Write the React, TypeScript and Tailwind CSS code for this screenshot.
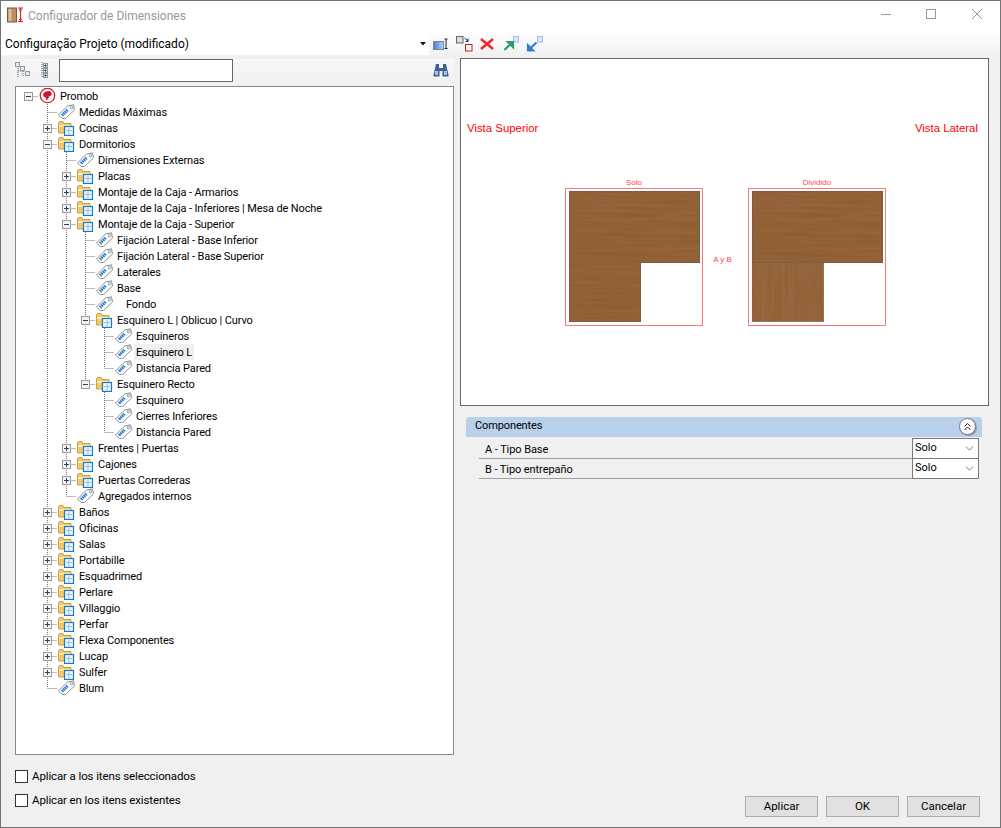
import { ChevronDown } from "lucide-react";

type Node = {
  label: string;
  icon: "root" | "folder" | "tag";
  open?: boolean;
  shift?: boolean;
  selected?: boolean;
  children?: Node[];
};

const tag = (label: string, extra: Partial<Node> = {}): Node => ({ label, icon: "tag", ...extra });
const closed = (label: string): Node => ({ label, icon: "folder", children: [tag("x")], open: false });
const opened = (label: string, children: Node[]): Node => ({ label, icon: "folder", open: true, children });

const tree: Node = {
  label: "Promob",
  icon: "root",
  open: true,
  children: [
    tag("Medidas Máximas"),
    closed("Cocinas"),
    opened("Dormitorios", [
      tag("Dimensiones Externas"),
      closed("Placas"),
      closed("Montaje de la Caja - Armarios"),
      closed("Montaje de la Caja - Inferiores | Mesa de Noche"),
      opened("Montaje de la Caja - Superior", [
        tag("Fijación Lateral - Base Inferior"),
        tag("Fijación Lateral - Base Superior"),
        tag("Laterales"),
        tag("Base"),
        tag("Fondo", { shift: true }),
        opened("Esquinero L | Oblicuo | Curvo", [
          tag("Esquineros"),
          tag("Esquinero L", { selected: true }),
          tag("Distancia Pared"),
        ]),
        opened("Esquinero Recto", [
          tag("Esquinero"),
          tag("Cierres Inferiores"),
          tag("Distancia Pared"),
        ]),
      ]),
      closed("Frentes | Puertas"),
      closed("Cajones"),
      closed("Puertas Correderas"),
      tag("Agregados internos"),
    ]),
    closed("Baños"),
    closed("Oficinas"),
    closed("Salas"),
    closed("Portábille"),
    closed("Esquadrimed"),
    closed("Perlare"),
    closed("Villaggio"),
    closed("Perfar"),
    closed("Flexa Componentes"),
    closed("Lucap"),
    closed("Sulfer"),
    tag("Blum"),
  ],
};

const Guide = ({ show }: { show: boolean }) => (
  <svg width="19" height="16" className="shrink-0">
    {show && <line x1="9.5" y1="0" x2="9.5" y2="16" stroke="#777" strokeDasharray="1 1" />}
  </svg>
);

const Connector = ({ node, isLast, isRoot }: { node: Node; isLast: boolean; isRoot: boolean }) => {
  const hasBox = !!node.children;
  return (
    <svg width="19" height="16" className="shrink-0">
      {!isRoot && <line x1="9.5" y1="0" x2="9.5" y2={isLast ? 8 : 16} stroke="#777" strokeDasharray="1 1" />}
      <line x1="9.5" y1="8.5" x2="19" y2="8.5" stroke="#777" strokeDasharray="1 1" />
      {hasBox && (
        <g>
          <rect x="5.5" y="4.5" width="8" height="8" fill="#f4f4f4" stroke="#9a9a9a" />
          <line x1="7" y1="8.5" x2="12" y2="8.5" stroke="#2c3e6b" />
          {!node.open && <line x1="9.5" y1="6" x2="9.5" y2="11" stroke="#2c3e6b" />}
        </g>
      )}
    </svg>
  );
};

const NodeIcon = ({ kind }: { kind: Node["icon"] }) => {
  if (kind === "root") {
    return (
      <svg width="19" height="16" viewBox="0 0 19 16" className="shrink-0">
        <circle cx="9.5" cy="7.5" r="7.2" fill="#fff" stroke="#d8232f" strokeWidth="1.3" />
        <path d="M5 6 L7.5 3.5 L12 3 L14 5.5 L12.5 8 L11 8.5 L10 11 L8.5 12.5 L7.5 9.5 L5.5 8.5 Z" fill="#d0182a" />
      </svg>
    );
  }
  if (kind === "tag") {
    return (
      <svg width="19" height="16" viewBox="0 0 19 16" className="shrink-0">
        <path d="M1.5 11 L10.5 2 L16.5 0.8 L17.5 6 L8.5 14.5 L5.5 14.5 Z" fill="#fff" stroke="#8b8f96" />
        <line x1="5" y1="11.5" x2="11" y2="5.5" stroke="#2f7ad0" strokeWidth="3" strokeDasharray="1.6 0.5" />
        <circle cx="14.5" cy="3.6" r="1.3" fill="#fff" stroke="#8b8f96" />
      </svg>
    );
  }
  return (
    <svg width="19" height="16" viewBox="0 0 19 16" className="shrink-0">
      <path d="M1.5 2.5 L1.5 13 L14 13 L14 3.5 L7 3.5 L6 1.5 L2.5 1.5 Z" fill="#f3c76a" stroke="#c9a04e" />
      <rect x="2" y="5" width="11.5" height="2" fill="#fdeab5" />
      <rect x="7.5" y="6.5" width="9" height="9" fill="#eaf4fb" stroke="#1878c0" strokeWidth="1.2" />
      <path d="M9 10.5H15M12 8V14.5" stroke="#8fc0e2" strokeWidth="1" fill="none" />
    </svg>
  );
};

const TreeRows = ({ node, guides, isLast, isRoot }: { node: Node; guides: boolean[]; isLast: boolean; isRoot?: boolean }) => (
  <>
    <div className="flex h-4 items-center">
      {guides.map((g, i) => (
        <Guide key={i} show={g} />
      ))}
      <Connector node={node} isLast={isLast} isRoot={!!isRoot} />
      <NodeIcon kind={node.icon} />
      <span
        className={`ml-[1px] flex h-4 items-center whitespace-nowrap px-[2px] pt-px text-[11px] leading-4 tracking-[-0.13px] text-black ${
          node.selected ? "bg-[#f0f0f0]" : ""
        } ${node.shift ? "pl-[11px]" : ""}`}
      >
        {node.label}
      </span>
    </div>
    {node.open &&
      node.children?.map((child, i) => (
        <TreeRows
          key={child.label + i}
          node={child}
          guides={[...guides, !isLast && !isRoot ? true : false]}
          isLast={i === node.children!.length - 1}
        />
      ))}
  </>
);

const WoodFilters = () => (
  <svg width="0" height="0" className="absolute">
    <defs>
      <filter id="grainH" x="0" y="0" width="100%" height="100%">
        <feTurbulence type="fractalNoise" baseFrequency="0.012 0.3" numOctaves="3" seed="4" />
        <feColorMatrix values="0 0 0 0 0.2  0 0 0 0 0.1  0 0 0 0 0  0.75 0 0 0 -0.2" />
        <feComposite in2="SourceGraphic" operator="in" result="n" />
        <feMerge>
          <feMergeNode in="SourceGraphic" />
          <feMergeNode in="n" />
        </feMerge>
      </filter>
      <filter id="grainV" x="0" y="0" width="100%" height="100%">
        <feTurbulence type="fractalNoise" baseFrequency="0.3 0.012" numOctaves="3" seed="9" />
        <feColorMatrix values="0 0 0 0 0.2  0 0 0 0 0.1  0 0 0 0 0  0.75 0 0 0 -0.2" />
        <feComposite in2="SourceGraphic" operator="in" result="n" />
        <feMerge>
          <feMergeNode in="SourceGraphic" />
          <feMergeNode in="n" />
        </feMerge>
      </filter>
    </defs>
  </svg>
);

const WoodSolo = () => (
  <svg width="131" height="131" viewBox="0 0 131 131" className="block">
    <path d="M0 0H131V72H72V131H0Z" fill="#96643e" filter="url(#grainH)" />
    <path d="M.5 .5H130.5V71.5H71.5V130.5H.5Z" fill="none" stroke="#7a5f48" />
  </svg>
);

const WoodSplit = () => (
  <svg width="131" height="131" viewBox="0 0 131 131" className="block">
    <rect x="0" y="72" width="72" height="59" fill="#9a6842" filter="url(#grainV)" />
    <rect x="0" y="0" width="131" height="72" fill="#96643e" filter="url(#grainH)" />
    <path d="M.5 .5H130.5V71.5H.5Z" fill="none" stroke="#7a5f48" />
    <path d="M71.5 72V130.5H0" fill="none" stroke="#8a7563" />
  </svg>
);

const Diagram = ({ label, children, pad }: { label: string; children: React.ReactNode; pad: string }) => (
  <div className="flex flex-col items-center">
    <span className="h-[10px] font-['Liberation_Sans',sans-serif] text-[8px] leading-[10px] text-[#f44]">{label}</span>
    <div className={`h-[138px] w-[138px] border border-[#f77] ${pad}`}>{children}</div>
  </div>
);

const TitleIcon = () => (
  <svg width="17" height="17" viewBox="0 0 17 17">
    <rect x="0.5" y="1" width="9" height="14" fill="#b98f62" stroke="#7a5a3a" />
    <rect x="1.5" y="2" width="3" height="12" fill="#d9bd98" />
    <path d="M13.5 1V14.5M11 1H16M11 14.5H16M12 3H15M12 12.5H15" stroke="#e0162b" strokeWidth="1.2" fill="none" />
  </svg>
);

const WindowControls = () => (
  <div className="flex items-center">
    <svg width="46" height="29" className="block">
      <line x1="20" y1="13.5" x2="30" y2="13.5" stroke="#9a9a9a" />
    </svg>
    <svg width="46" height="29" className="block">
      <rect x="19.5" y="8.5" width="9" height="9" fill="none" stroke="#9a9a9a" />
    </svg>
    <svg width="46" height="29" className="block">
      <path d="M19 8L29 18M29 8L19 18" stroke="#9a9a9a" fill="none" />
    </svg>
  </div>
);

const ResizeIcon = () => (
  <svg width="16" height="16" viewBox="0 0 16 16">
    <defs>
      <linearGradient id="resizeFill" x1="0" y1="0" x2="1" y2="0">
        <stop offset="0" stopColor="#3f7fe0" />
        <stop offset="1" stopColor="#bcd4f4" />
      </linearGradient>
    </defs>
    <rect x="0.5" y="5.5" width="10" height="8" fill="url(#resizeFill)" stroke="#7a8796" />
    <path d="M13 3V12.5M11.5 3H14.5M11.5 12.5H14.5" stroke="#222" fill="none" />
  </svg>
);

const SwapIcon = () => (
  <svg width="18" height="18" viewBox="0 0 18 18">
    <rect x="1.5" y="1.5" width="6.5" height="6.5" fill="#ddd" stroke="#666" />
    <rect x="10.5" y="9.5" width="6.5" height="6.5" fill="#fff" stroke="#e01010" />
    <path d="M9.5 3L13 6M13 3.5V6.5H10.5" stroke="#0a2a80" fill="none" />
  </svg>
);

const DeleteIcon = () => (
  <svg width="16" height="16" viewBox="0 0 16 16">
    <path d="M2 3L14 13M14 3L2 13" stroke="#ee2a35" strokeWidth="2.6" fill="none" />
  </svg>
);

const ArrowDocIcon = ({ color, down }: { color: string; down?: boolean }) => (
  <svg width="18" height="16" viewBox="0 0 18 16">
    <rect x="11.5" y="0.5" width="5" height="5.5" fill="#dce8f8" stroke="#9dbce4" />
    {down ? (
      <path d="M10.5 6.5L4 12.5M2 9.5V14.5H7Z" stroke={color} strokeWidth="2.2" fill={color} />
    ) : (
      <path d="M2.5 14L8.5 8M6 6H11V11Z" stroke={color} strokeWidth="2.2" fill={color} />
    )}
  </svg>
);

const CollapseAllIcon = () => (
  <svg width="16" height="18" viewBox="0 0 16 18">
    <path d="M3 5V16M8 10V16M3 10H6" stroke="#555" strokeDasharray="1 1" fill="none" />
    <rect x="0.5" y="1.5" width="4" height="4" fill="#eee" stroke="#8a99a8" />
    <rect x="5.5" y="5.5" width="4" height="4" fill="#eee" stroke="#8a99a8" />
    <rect x="10.5" y="10.5" width="4" height="4" fill="#eee" stroke="#8a99a8" />
  </svg>
);

const ExpandAllIcon = () => (
  <svg width="14" height="18" viewBox="0 0 14 18">
    <path d="M3 1V17" stroke="#555" strokeDasharray="1 1" fill="none" />
    {[2, 7, 12].map((y) => (
      <g key={y}>
        <rect x="4.5" y={y + 0.5} width="4" height="4" fill="#eee" stroke="#8a99a8" />
        <path d={`M5.5 ${y + 2.5}H7.5M6.5 ${y + 1.5}V${y + 3.5}`} stroke="#222" fill="none" />
      </g>
    ))}
  </svg>
);

const BinocularsIcon = () => (
  <svg width="16" height="14" viewBox="0 0 16 14">
    <path d="M3 1H6V5H10V1H13L15.5 12V13.5H9.5V8H6.5V13.5H.5V12Z" fill="#3f5f96" />
    <rect x="2" y="8" width="3" height="4" fill="#a9bfe0" />
    <rect x="11" y="8" width="3" height="4" fill="#a9bfe0" />
  </svg>
);

const CheckRow = ({ label }: { label: string }) => (
  <div className="flex h-[13px] items-center gap-[4px]">
    <span className="h-[13px] w-[13px] border border-[#333] bg-white" />
    <span className="text-[11.5px] leading-[13px] tracking-[-0.12px] text-black">{label}</span>
  </div>
);

const PropRow = ({ label }: { label: string }) => (
  <div className="ml-[13px] mr-[3px] flex h-5 items-center justify-between border-b border-[#a0a0a0]">
    <span className="pl-[6px] pt-[3px] text-[11px] tracking-[-0.08px] text-black">{label}</span>
    <div className="-mt-px flex h-[21px] w-[67px] items-center justify-between self-start border border-[#7a7a7a] bg-white pl-[2px] pr-[2px] text-[11px] text-black">
      Solo
      <ChevronDown size={13} strokeWidth={1.2} color="#333" />
    </div>
  </div>
);

const DialogButton = ({ label }: { label: string }) => (
  <button className="h-[21px] w-[73px] border border-[#adadad] bg-[#e1e1e1] text-[11.5px] leading-none text-black">
    {label}
  </button>
);

const App = () => {
  return (
    <div className="flex h-[828px] w-[1001px] flex-col overflow-hidden border border-[#747474] bg-[#f0f0f0] font-['Roboto',sans-serif]">
      <WoodFilters />

      <div className="flex h-[29px] shrink-0 items-center justify-between bg-white pl-[6px] pr-[1px]">
        <div className="flex items-center gap-[4px]">
          <TitleIcon />
          <span className="text-[12px] text-[#999]">Configurador de Dimensiones</span>
        </div>
        <WindowControls />
      </div>

      <div className="flex h-[27px] shrink-0 items-center bg-gradient-to-b from-white to-[#f0f0f0]">
        <div className="flex h-[22px] w-[428px] items-center justify-between bg-white pl-[4px] pr-[2px]">
          <span className="text-[12px] text-black">Configuração Projeto (modificado)</span>
          <svg width="6" height="4" viewBox="0 0 6 4" className="mr-[1px]">
            <path d="M0 0H6L3 3.5Z" fill="#111" />
          </svg>
        </div>
        <div className="ml-[4px] flex items-center gap-[6px]">
          <ResizeIcon />
          <SwapIcon />
          <DeleteIcon />
          <span className="ml-[1px]">
            <ArrowDocIcon color="#2a9a6c" />
          </span>
          <ArrowDocIcon color="#3a7ad0" down />
        </div>
      </div>

      <div className="flex min-h-0 flex-1 pl-[11px]">
        <div className="flex w-[443px] shrink-0 flex-col">
          <div className="mt-[2px] flex h-[27px] shrink-0 items-start bg-gradient-to-b from-[#f8f8f8] to-[#f0f0f0] pl-[3px] pr-[6px]">
            <div className="mt-[2px] flex items-center">
              <CollapseAllIcon />
              <span className="ml-[8px]">
                <ExpandAllIcon />
              </span>
            </div>
            <div className="ml-[6px] h-[23px] w-[174px] border border-[#666] bg-white" />
            <div className="ml-auto mt-[4px]">
              <BinocularsIcon />
            </div>
          </div>
          <div className="ml-[3px] h-[669px] w-[439px] shrink-0 border border-[#828790] bg-white pl-[3px] pt-px">
            <TreeRows node={tree} guides={[]} isLast={true} isRoot />
          </div>
          <div className="ml-[3px] mt-[15px] flex flex-col gap-[11px]">
            <CheckRow label="Aplicar a los itens seleccionados" />
            <CheckRow label="Aplicar en los itens existentes" />
          </div>
        </div>

        <div className="ml-[5px] flex w-[529px] shrink-0 flex-col">
          <div className="mt-px flex h-[348px] shrink-0 flex-col border border-[#666] bg-white">
            <div className="flex justify-between px-[6px] pt-[62px] font-['Liberation_Sans',sans-serif] text-[11.4px] leading-[14px] text-[#f00]">
              <span>Vista Superior</span>
              <span className="pr-[4px]">Vista Lateral</span>
            </div>
            <div className="ml-[104px] mt-[43px] flex items-start">
              <Diagram label="Solo" pad="pl-[3px] pt-[2px]">
                <WoodSolo />
              </Diagram>
              <span className="mt-[77px] w-[39px] text-center font-['Liberation_Sans',sans-serif] text-[8px] leading-[10px] text-[#f44]">
                A y B
              </span>
              <span className="w-[6px]" />
              <Diagram label="Dividido" pad="pl-[3px] pt-[2px]">
                <WoodSplit />
              </Diagram>
            </div>
          </div>

          <div className="ml-[6px] mt-[11px] w-[516px]">
            <div className="flex h-5 items-center justify-between rounded-t-[3px] bg-[#b8d0ea] pl-[9px] pr-[6px]">
              <span className="pb-[2px] text-[11px] tracking-[-0.12px] text-black">Componentes</span>
              <span className="-mt-px flex h-[17px] w-[17px] items-center justify-center rounded-full border border-[#777] bg-white shadow-[1px_1px_1px_#8899aa]">
                <svg width="9" height="9" viewBox="0 0 9 9">
                  <path d="M1.5 4.5L4.5 1.5L7.5 4.5M1.5 8L4.5 5L7.5 8" fill="none" stroke="#222" />
                </svg>
              </span>
            </div>
            <div className="mt-[2px]">
              <PropRow label="A - Tipo Base" />
              <PropRow label="B - Tipo entrepaño" />
            </div>
          </div>

          <div className="mb-[10px] ml-[285px] mt-auto flex gap-2">
            <DialogButton label="Aplicar" />
            <DialogButton label="OK" />
            <DialogButton label="Cancelar" />
          </div>
        </div>
      </div>
    </div>
  );
};

export default App;
